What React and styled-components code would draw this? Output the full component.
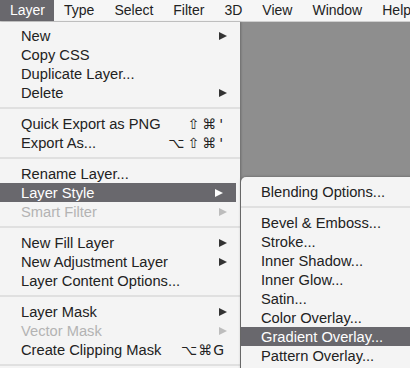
import React from 'react'
import styled, { createGlobalStyle } from 'styled-components'

const Global = createGlobalStyle`
  html, body {
    margin: 0;
    padding: 0;
    background: #8e8e8e;
  }
  body {
    font-family: "Liberation Sans", Arial, sans-serif;
  }
`

const Screen = styled.div`
  width: 410px;
  height: 368px;
  overflow: hidden;
  display: flex;
  flex-direction: column;
`

const MenuBar = styled.div`
  height: 21px;
  display: flex;
  background: #f6f6f6;
  border-bottom: 1px solid #cfcfcf;
  font-size: 14px;
  color: #222;
`

const BarItem = styled.div`
  height: 21px;
  line-height: 21px;
  padding: 0 ${p => p.pad || 10}px 0 10px;
  background: ${p => (p.active ? '#69686d' : 'transparent')};
  color: ${p => (p.active ? '#fff' : '#222')};
  white-space: nowrap;
`

const Body = styled.div`
  flex: 1;
  display: flex;
`

const Menu = styled.div`
  width: 240px;
  background: #f4f4f4;
  padding-top: 4px;
  box-shadow: 1px 0 2px rgba(0, 0, 0, 0.25);
  position: relative;
  z-index: 1;
`

const Desktop = styled.div`
  flex: 1;
  background: #8e8e8e;
  position: relative;
`

const SubMenu = styled.div`
  position: absolute;
  top: 155px;
  left: 1px;
  width: 200px;
  padding-top: 5px;
  height: 400px;
  background: #f4f4f4;
  border-top-left-radius: 5px;
  box-shadow: 0 0 3px rgba(0, 0, 0, 0.35);
  z-index: 2;
`

const Item = styled.div`
  height: 19px;
  display: flex;
  align-items: center;
  padding: 0 13px 0 ${p => p.indent || 21}px;
  margin-right: ${p => p.trim || 0}px;
  font-size: 14.7px;
  background: ${p => (p.active ? '#69686d' : 'transparent')};
  color: ${p => (p.active ? '#fff' : p.disabled ? '#b3b3b3' : '#222')};
  white-space: nowrap;
`

const Label = styled.span`
  flex: 1;
`

const Shortcut = styled.span`
  font-family: "DejaVu Sans", "Liberation Sans", sans-serif;
  font-size: 14px;
  letter-spacing: ${p => (p.spread ? 3 : 1)}px;
  margin-right: ${p => (p.spread ? 1 : 2)}px;
`

const Arrow = styled.span`
  width: 0;
  height: 0;
  border-top: 4.5px solid transparent;
  border-bottom: 4.5px solid transparent;
  border-left: 8px solid ${p => (p.active ? '#fff' : p.disabled ? '#bdbdbd' : '#333')};
`

const Sep = styled.div`
  height: 12px;
  display: flex;
  align-items: center;
  &::after {
    content: '';
    flex: 1;
    height: 2px;
    background: #e0e0e0;
  }
`

const mainItems = [
  { label: 'New', arrow: true },
  { label: 'Copy CSS' },
  { label: 'Duplicate Layer...' },
  { label: 'Delete', arrow: true },
  'sep',
  { label: 'Quick Export as PNG', key: "⇧⌘'" },
  { label: 'Export As...', key: "⌥⇧⌘'" },
  'sep',
  { label: 'Rename Layer...' },
  { label: 'Layer Style', arrow: true, active: true },
  { label: 'Smart Filter', arrow: true, disabled: true },
  'sep',
  { label: 'New Fill Layer', arrow: true },
  { label: 'New Adjustment Layer', arrow: true },
  { label: 'Layer Content Options...' },
  'sep',
  { label: 'Layer Mask', arrow: true },
  { label: 'Vector Mask', arrow: true, disabled: true },
  { label: 'Create Clipping Mask', key: '⌥⌘G' },
  'sep',
]

const subItems = [
  { label: 'Blending Options...' },
  'sep',
  { label: 'Bevel & Emboss...' },
  { label: 'Stroke...' },
  { label: 'Inner Shadow...' },
  { label: 'Inner Glow...' },
  { label: 'Satin...' },
  { label: 'Color Overlay...' },
  { label: 'Gradient Overlay...', active: true },
  { label: 'Pattern Overlay...' },
]

const renderItems = (items, indent, trim) =>
  items.map((it, i) =>
    it === 'sep' ? (
      <Sep key={i} />
    ) : (
      <Item key={i} indent={indent} trim={it.active ? trim : 0} active={it.active} disabled={it.disabled}>
        <Label>{it.label}</Label>
        {it.key && <Shortcut spread={it.key.endsWith("'")}>{it.key}</Shortcut>}
        {it.arrow && <Arrow active={it.active} disabled={it.disabled} />}
      </Item>
    )
  )

export default function App() {
  return (
    <Screen>
      <Global />
      <MenuBar>
        <BarItem active pad={9}>Layer</BarItem>
        <BarItem>Type</BarItem>
        <BarItem>Select</BarItem>
        <BarItem>Filter</BarItem>
        <BarItem>3D</BarItem>
        <BarItem>View</BarItem>
        <BarItem>Window</BarItem>
        <BarItem>Help</BarItem>
      </MenuBar>
      <Body>
        <Menu>{renderItems(mainItems, 21, 4)}</Menu>
        <Desktop>
          <SubMenu>{renderItems(subItems, 20, 0)}</SubMenu>
        </Desktop>
      </Body>
    </Screen>
  )
}
